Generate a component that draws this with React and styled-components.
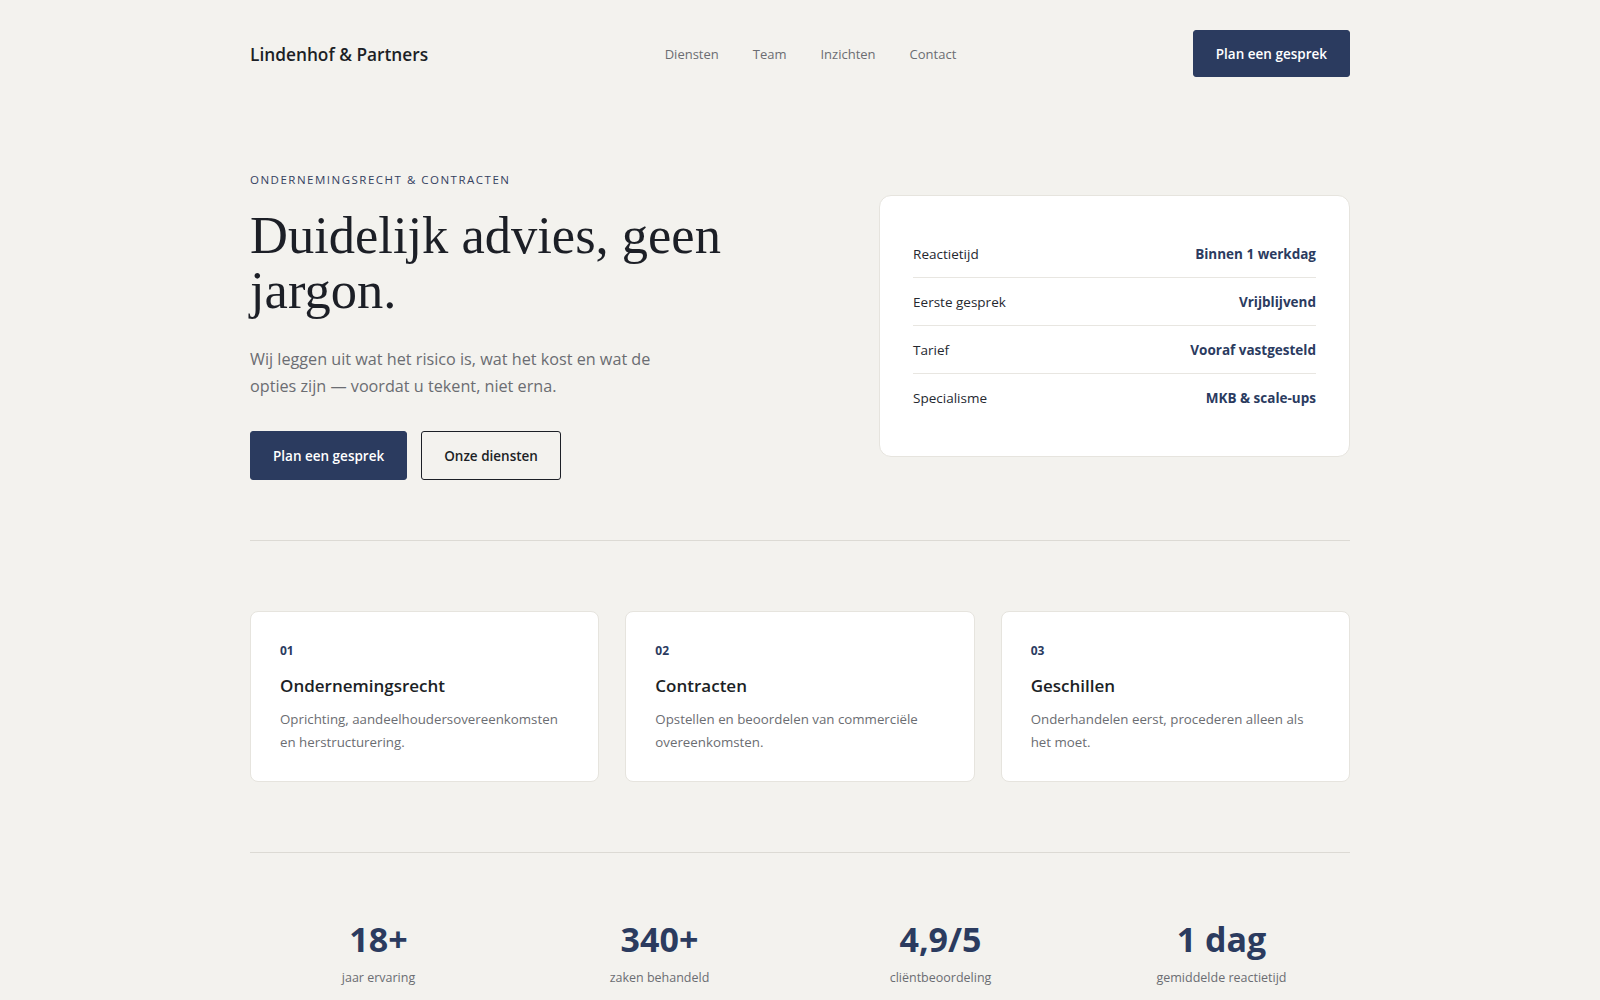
import React from "react";
import styled, { createGlobalStyle } from "styled-components";

const GlobalStyle = createGlobalStyle`
  * { box-sizing: border-box; }
  html, body { margin: 0; padding: 0; }
  body {
    background: #f3f2ee;
    color: #1c1f26;
    font-family: "Open Sans", "Noto Sans", sans-serif;
    -webkit-font-smoothing: antialiased;
  }
`;

const navy = "#2b3b5f";

const Page = styled.div`
  width: 1100px;
  margin: 0 auto;
`;

const Header = styled.header`
  display: flex;
  align-items: center;
  justify-content: space-between;
  padding-top: 30px;
`;

const Logo = styled.div`
  font-size: 17.3px;
  font-weight: 600;
  color: #1c1f26;
  padding-top: 2px;
`;

const Nav = styled.nav`
  display: flex;
  gap: 34px;
  padding-top: 1px;
`;

const NavLink = styled.a`
  font-size: 13px;
  color: #6b6d72;
  text-decoration: none;
`;

const Button = styled.a`
  display: inline-flex;
  align-items: center;
  justify-content: center;
  height: ${(p) => (p.$large ? "49px" : "47px")};
  padding: 0 22px;
  border-radius: 3px;
  font-size: 13.5px;
  font-weight: 600;
  text-decoration: none;
  background: ${(p) => (p.$outline ? "transparent" : navy)};
  color: ${(p) => (p.$outline ? "#1c1f26" : "#ffffff")};
  border: 1px solid ${(p) => (p.$outline ? "#1c1f26" : navy)};
`;

const Hero = styled.section`
  display: grid;
  grid-template-columns: 1.2fr 1fr;
  gap: 64px;
  align-items: center;
  padding: 95px 0 60px;
`;

const Eyebrow = styled.div`
  font-size: 11.5px;
  font-weight: 500;
  letter-spacing: 1.5px;
  text-transform: uppercase;
  color: #34415f;
  line-height: 16px;
`;

const Title = styled.h1`
  margin: 20px 0 0;
  font-family: "Liberation Serif", "Times New Roman", serif;
  font-weight: 400;
  font-size: 52.5px;
  line-height: 55px;
  color: #1c1f26;
`;

const Lead = styled.p`
  margin: 28px 0 0;
  max-width: 430px;
  font-size: 16.2px;
  line-height: 27px;
  color: #6b6d72;
`;

const Actions = styled.div`
  display: flex;
  gap: 14px;
  margin-top: 31px;
`;

const FactCard = styled.div`
  background: #ffffff;
  border: 1px solid #e6e4de;
  border-radius: 12px;
  padding: 34px 33px;
`;

const FactRow = styled.div`
  display: flex;
  justify-content: space-between;
  align-items: center;
  height: 48px;
  font-size: 13.5px;
  border-bottom: 1px solid ${(p) => (p.$last ? "transparent" : "#e8e6e1")};
`;

const FactLabel = styled.span`
  color: #25282f;
`;

const FactValue = styled.span`
  color: ${navy};
  font-weight: 700;
`;

const Rule = styled.hr`
  margin: 0;
  border: 0;
  border-top: 1px solid #dcdad4;
`;

const Services = styled.section`
  display: grid;
  grid-template-columns: repeat(3, 1fr);
  gap: 26px;
  padding: 70px 0;
`;

const ServiceCard = styled.article`
  background: #ffffff;
  border: 1px solid #e6e4de;
  border-radius: 8px;
  padding: 31px 29px 27px;
`;

const ServiceNumber = styled.div`
  font-size: 12px;
  line-height: 16px;
  font-weight: 700;
  color: ${navy};
`;

const ServiceTitle = styled.h3`
  margin: 14px 0 0;
  font-size: 17px;
  line-height: 26px;
  font-weight: 600;
  color: #1c1f26;
`;

const ServiceText = styled.p`
  margin: 9px 0 0;
  font-size: 13.3px;
  line-height: 23px;
  color: #6b6d72;
`;

const Stats = styled.section`
  display: grid;
  grid-template-columns: repeat(4, 1fr);
  gap: 24px;
  padding: 65px 0 12px;
  text-align: center;
`;

const StatValue = styled.div`
  font-size: 34px;
  line-height: 42px;
  font-weight: 700;
  color: ${navy};
`;

const StatLabel = styled.div`
  margin-top: 9px;
  font-size: 12.5px;
  line-height: 18px;
  color: #6b6d72;
`;

const facts = [
  ["Reactietijd", "Binnen 1 werkdag"],
  ["Eerste gesprek", "Vrijblijvend"],
  ["Tarief", "Vooraf vastgesteld"],
  ["Specialisme", "MKB & scale-ups"],
];

const services = [
  ["01", "Ondernemingsrecht", "Oprichting, aandeelhoudersovereenkomsten en herstructurering."],
  ["02", "Contracten", "Opstellen en beoordelen van commerciële overeenkomsten."],
  ["03", "Geschillen", "Onderhandelen eerst, procederen alleen als het moet."],
];

const stats = [
  ["18+", "jaar ervaring"],
  ["340+", "zaken behandeld"],
  ["4,9/5", "cliëntbeoordeling"],
  ["1 dag", "gemiddelde reactietijd"],
];

export default function App() {
  return (
    <>
      <GlobalStyle />
      <Page>
        <Header>
          <Logo>Lindenhof &amp; Partners</Logo>
          <Nav>
            <NavLink href="#">Diensten</NavLink>
            <NavLink href="#">Team</NavLink>
            <NavLink href="#">Inzichten</NavLink>
            <NavLink href="#">Contact</NavLink>
          </Nav>
          <Button href="#">Plan een gesprek</Button>
        </Header>

        <Hero>
          <div>
            <Eyebrow>Ondernemingsrecht &amp; contracten</Eyebrow>
            <Title>Duidelijk advies, geen jargon.</Title>
            <Lead>
              Wij leggen uit wat het risico is, wat het kost en wat de opties zijn — voordat u
              tekent, niet erna.
            </Lead>
            <Actions>
              <Button href="#" $large>Plan een gesprek</Button>
              <Button href="#" $large $outline>Onze diensten</Button>
            </Actions>
          </div>
          <FactCard>
            {facts.map(([label, value], i) => (
              <FactRow key={label} $last={i === facts.length - 1}>
                <FactLabel>{label}</FactLabel>
                <FactValue>{value}</FactValue>
              </FactRow>
            ))}
          </FactCard>
        </Hero>

        <Rule />

        <Services>
          {services.map(([num, title, text]) => (
            <ServiceCard key={num}>
              <ServiceNumber>{num}</ServiceNumber>
              <ServiceTitle>{title}</ServiceTitle>
              <ServiceText>{text}</ServiceText>
            </ServiceCard>
          ))}
        </Services>

        <Rule />

        <Stats>
          {stats.map(([value, label]) => (
            <div key={label}>
              <StatValue>{value}</StatValue>
              <StatLabel>{label}</StatLabel>
            </div>
          ))}
        </Stats>
      </Page>
    </>
  );
}
